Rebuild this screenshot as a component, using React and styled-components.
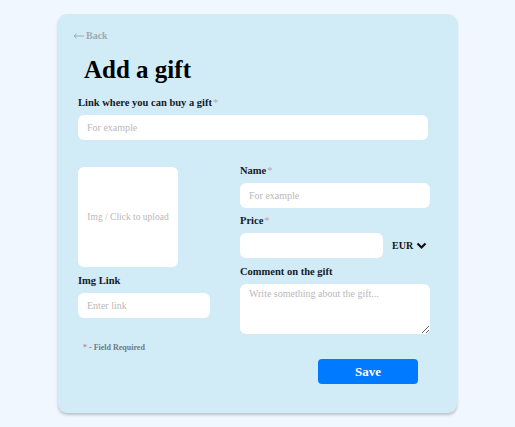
import React from "react";
import styled, { createGlobalStyle } from "styled-components";

const Global = createGlobalStyle`
  html, body { margin: 0; padding: 0; background: #f0f7fe; }
  body { font-family: "Liberation Serif", "Times New Roman", serif; }
  * { box-sizing: border-box; }
`;

const Page = styled.div`
  display: flex;
  justify-content: center;
  padding-top: 14px;
  min-height: 427px;
`;

const Card = styled.div`
  width: 399px;
  height: 399px;
  background: #d1ecf7;
  border-radius: 9px;
  box-shadow: 0 2px 3px rgba(0, 0, 0, 0.22);
  padding: 16px 27px 0 20px;
  display: flex;
  flex-direction: column;
`;

const BackLink = styled.a`
  margin-left: -5px;
  display: flex;
  align-items: center;
  gap: 2px;
  font-size: 10px;
  line-height: 12px;
  font-weight: 700;
  color: #a3a8ab;
  text-decoration: none;
  cursor: pointer;
  align-self: flex-start;
`;

const Title = styled.h1`
  margin: 12px 0 0 6px;
  font-size: 25px;
  line-height: 32px;
  font-weight: 700;
  color: #000;
`;

const Label = styled.label`
  display: block;
  font-size: 10.5px;
  line-height: 14px;
  font-weight: 700;
  color: #141a2a;
  margin-bottom: 5px;
`;

const Star = styled.span`
  color: #c9a0a8;
  font-weight: 400;
  margin-left: 1px;
`;

const Field = styled.div`
  margin-top: ${(p) => p.$mt || 0}px;
`;

const Input = styled.input`
  display: block;
  width: ${(p) => p.$w}px;
  height: 25px;
  border: none;
  border-radius: 6px;
  background: #fff;
  padding: 0 9px;
  font-family: "Liberation Serif", serif;
  font-size: 10px;
  color: #222;
  outline: none;
  &::placeholder { color: #b9b9b9; }
`;

const TextArea = styled.textarea`
  display: block;
  width: 190px;
  height: 50px;
  border: none;
  border-radius: 6px;
  background: #fff;
  padding: 4px 9px;
  font-family: "Liberation Serif", serif;
  font-size: 10px;
  outline: none;
  resize: both;
  &::placeholder { color: #b9b9b9; }
`;

const Columns = styled.div`
  display: grid;
  grid-template-columns: 132px 190px;
  column-gap: 30px;
  margin-top: 25px;
`;

const Column = styled.div`
  display: flex;
  flex-direction: column;
  margin-top: ${(p) => p.$mt || 0}px;
`;

const ImgBox = styled.div`
  width: 100px;
  height: 100px;
  margin-top: 2px;
  margin-bottom: 7px;
  background: #fff;
  border-radius: 6px;
  display: flex;
  align-items: center;
  justify-content: center;
  font-size: 9.5px;
  color: #b9b9b9;
  cursor: pointer;
`;

const PriceRow = styled.div`
  display: flex;
  align-items: center;
`;

const Currency = styled.div`
  margin-left: 9px;
  display: flex;
  align-items: center;
  gap: 3px;
  font-size: 10px;
  font-weight: 700;
  color: #111;
`;

const RequiredNote = styled.div`
  margin: 9px 0 0 5px;
  font-size: 8px;
  line-height: 10px;
  font-weight: 700;
  color: #6e7a88;
`;

const RedStar = styled.span`
  color: #c98690;
`;

const Actions = styled.div`
  display: flex;
  justify-content: flex-end;
  padding-right: 12px;
  margin-top: 6px;
`;

const SaveButton = styled.button`
  width: 100px;
  height: 25px;
  border: none;
  border-radius: 4px;
  background: #007bff;
  color: #fff;
  font-family: "Liberation Serif", serif;
  font-size: 13px;
  font-weight: 700;
  cursor: pointer;
`;

export default function App() {
  return (
    <>
      <Global />
      <Page>
        <Card>
          <BackLink>
            <svg width="11" height="6" viewBox="0 0 11 6">
              <path d="M11 3 H1.5 M3.5 0.8 L1 3 L3.5 5.2" fill="none" stroke="#a3a8ab" strokeWidth="1" />
            </svg>
            Back
          </BackLink>
          <Title>Add a gift</Title>
          <Field $mt={10}>
            <Label>
              Link where you can buy a gift<Star>*</Star>
            </Label>
            <Input $w={350} placeholder="For example" />
          </Field>
          <Columns>
            <Column>
              <ImgBox>Img / Click to upload</ImgBox>
              <Label>Img Link</Label>
              <Input $w={132} placeholder="Enter link" />
            </Column>
            <Column $mt={-1}>
              <Field>
                <Label>
                  Name<Star>*</Star>
                </Label>
                <Input $w={190} placeholder="For example" />
              </Field>
              <Field $mt={6}>
                <Label>
                  Price<Star>*</Star>
                </Label>
                <PriceRow>
                  <Input $w={143} />
                  <Currency>
                    EUR
                    <svg width="11" height="8" viewBox="0 0 11 8">
                      <path d="M1.5 1.5 L5.5 5.5 L9.5 1.5" fill="none" stroke="#111" strokeWidth="2.2" />
                    </svg>
                  </Currency>
                </PriceRow>
              </Field>
              <Field $mt={7}>
                <Label>Comment on the gift</Label>
                <TextArea placeholder="Write something about the gift..." />
              </Field>
            </Column>
          </Columns>
          <RequiredNote>
            <RedStar>*</RedStar> - Field Required
          </RequiredNote>
          <Actions>
            <SaveButton>Save</SaveButton>
          </Actions>
        </Card>
      </Page>
    </>
  );
}
